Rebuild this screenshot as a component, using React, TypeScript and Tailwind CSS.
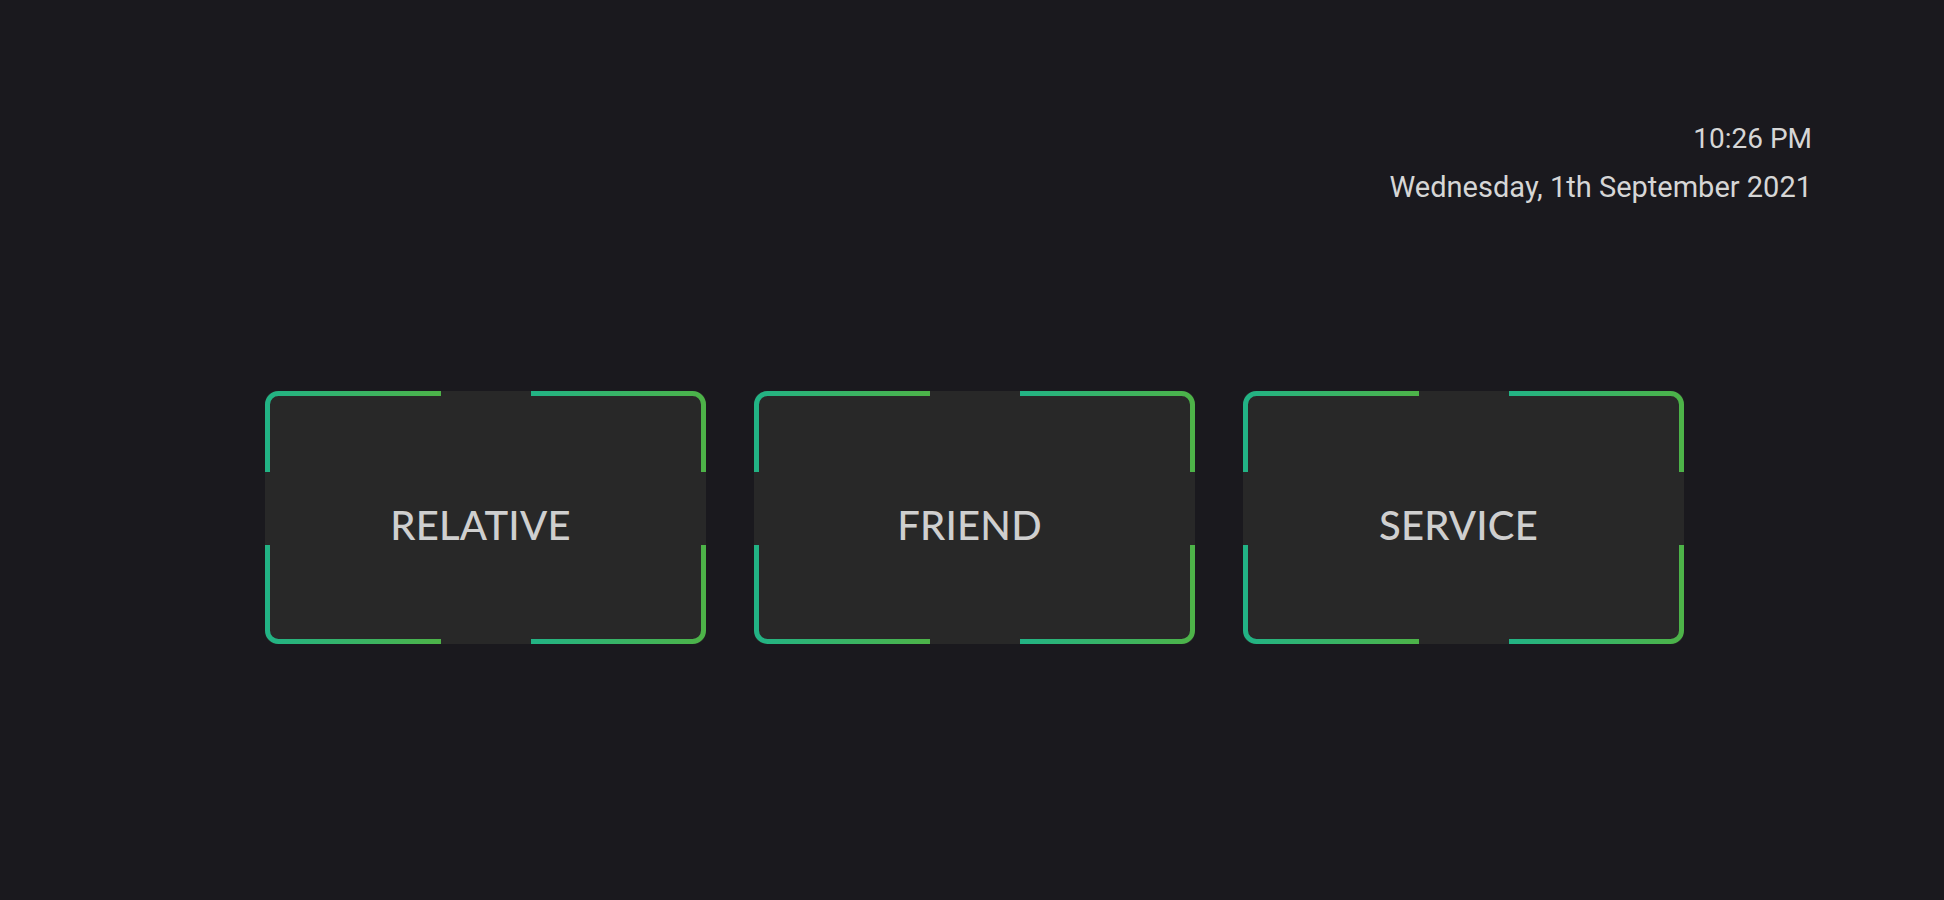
import React from "react";

const W = 441;
const H = 253;
const S = 5;
const R = 11;

function Card({ label, idx }: { label: string; idx: number }) {
  const h = S / 2;
  const topGapStart = 176;
  const topGapEnd = 266;
  const sideGapStart = 81;
  const sideGapEnd = 154;
  const x2 = W - h;
  const y2 = H - h;
  const segs = [
    `M ${h} ${sideGapStart} L ${h} ${h + R} A ${R} ${R} 0 0 1 ${h + R} ${h} L ${topGapStart} ${h}`,
    `M ${topGapEnd} ${h} L ${x2 - R} ${h} A ${R} ${R} 0 0 1 ${x2} ${h + R} L ${x2} ${sideGapStart}`,
    `M ${h} ${sideGapEnd} L ${h} ${y2 - R} A ${R} ${R} 0 0 0 ${h + R} ${y2} L ${topGapStart} ${y2}`,
    `M ${topGapEnd} ${y2} L ${x2 - R} ${y2} A ${R} ${R} 0 0 0 ${x2} ${y2 - R} L ${x2} ${sideGapEnd}`,
  ];
  return (
    <div className="relative flex h-[253px] w-[441px] items-center justify-center rounded-[12px] bg-[#282828]">
      <svg
        className="absolute inset-0"
        width={W}
        height={H}
        viewBox={`0 0 ${W} ${H}`}
        fill="none"
      >
        <defs>
          <linearGradient id={`g${idx}`} x1="0" y1="0" x2="1" y2="0">
            <stop offset="0" stopColor="#22b385" />
            <stop offset="1" stopColor="#4db348" />
          </linearGradient>
        </defs>
        {segs.map((d, i) => (
          <path
            key={i}
            d={d}
            stroke={`url(#g${idx})`}
            strokeWidth={S}
            strokeLinecap="butt"
          />
        ))}
      </svg>
      <span
        className="pt-[14px] pr-[10px] text-[40px] font-medium tracking-[0.2px] text-[#cfcfcf]"
        style={{ fontFamily: "Lato, 'Noto Sans', sans-serif" }}
      >
        {label}
      </span>
    </div>
  );
}

export default function App() {
  return (
    <div
      className="flex min-h-[900px] w-full flex-col bg-[#1a191e]"
      style={{ fontFamily: "Roboto, 'Liberation Sans', sans-serif" }}
    >
      <div className="flex flex-col items-end pt-[115px] pr-[132px] leading-[48px] text-[#d6d6d6]">
        <div className="text-[28px]">10:26 PM</div>
        <div className="text-[29px]">Wednesday, 1th September 2021</div>
      </div>
      <div className="mt-[180px] flex justify-center gap-[48px] pl-[5px]">
        <Card label="RELATIVE" idx={0} />
        <Card label="FRIEND" idx={1} />
        <Card label="SERVICE" idx={2} />
      </div>
    </div>
  );
}
